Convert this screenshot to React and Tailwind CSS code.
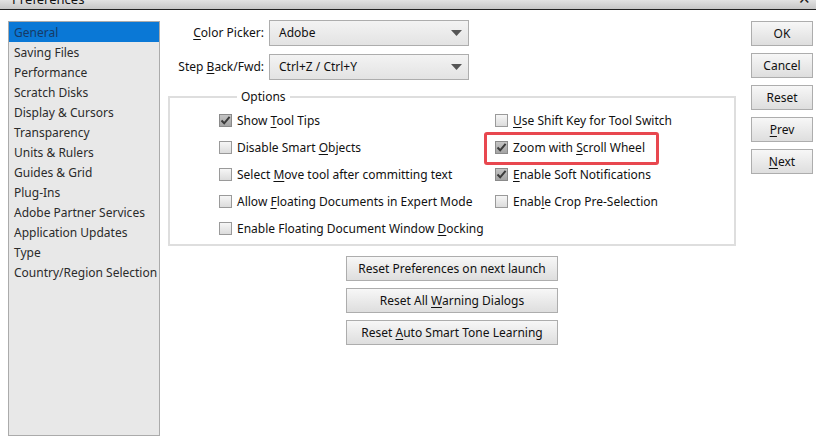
import React from 'react';

const font = { fontFamily: '"Noto Sans", "Open Sans", sans-serif' };

const sections = [
  'General', 'Saving Files', 'Performance', 'Scratch Disks', 'Display & Cursors',
  'Transparency', 'Units & Rulers', 'Guides & Grid', 'Plug-Ins', 'Adobe Partner Services',
  'Application Updates', 'Type', 'Country/Region Selection',
];

// label split as [before, underlined, after]
const leftOpts = [
  { l: ['Show ', 'T', 'ool Tips'], on: true },
  { l: ['Disable Smart ', 'O', 'bjects'], on: false },
  { l: ['Select ', 'M', 'ove tool after committing text'], on: false },
  { l: ['Allow ', 'F', 'loating Documents in Expert Mode'], on: false },
  { l: ['Enable Floating Document Window ', 'D', 'ocking'], on: false },
];
const rightOpts = [
  { l: ['', 'U', 'se Shift Key for Tool Switch'], on: false },
  { l: ['Zoom with ', 'S', 'croll Wheel'], on: true, mark: true },
  { l: ['', 'E', 'nable Soft Notifications'], on: true },
  { l: ['Enab', 'l', 'e Crop Pre-Selection'], on: false },
];

function Acc({ parts }) {
  return (
    <>
      {parts[0]}<span className="underline underline-offset-2">{parts[1]}</span>{parts[2]}
    </>
  );
}

function Box({ on }) {
  return (
    <span className={`w-[13px] h-[13px] shrink-0 border flex items-center justify-center ${on ? 'border-[#8a8a8a] bg-gradient-to-b from-[#c4c4c4] to-[#a4a4a4]' : 'border-[#9a9a9a] bg-gradient-to-b from-[#f6f6f6] to-[#dcdcdc]'}`}>
      {on && (
        <svg width="11" height="11" viewBox="0 0 11 11">
          <path d="M1.5 5.5 L4.2 8.3 L9.6 1.8" fill="none" stroke="#3a3a3a" strokeWidth="2" />
        </svg>
      )}
    </span>
  );
}

function Option({ o }) {
  return (
    <div className="h-[27px] flex items-center">
      <div className="relative flex items-center gap-[5px]">
        <Box on={o.on} />
        <span className="text-[12px] text-[#111] leading-none whitespace-nowrap"><Acc parts={o.l} /></span>
        {o.mark && (
          <span className="absolute left-[-11px] top-[-9px] w-[175px] h-[33px] border-[3px] border-[#e8474f] rounded-[3px]" />
        )}
      </div>
    </div>
  );
}

function Btn({ children, w }) {
  return (
    <button className={`${w} h-[25px] border border-[#adadad] bg-gradient-to-b from-[#f7f7f7] to-[#dedede] text-[12px] text-[#111] leading-none whitespace-nowrap`}>
      {children}
    </button>
  );
}

function Select({ value }) {
  return (
    <div className="w-[200px] h-[26px] border border-[#adadad] bg-gradient-to-b from-[#f3f3f3] to-[#e3e3e3] flex items-center pl-[9px] pr-[6px]">
      <span className="flex-1 text-[12px] text-[#111]">{value}</span>
      <svg width="11" height="6" viewBox="0 0 11 6"><path d="M0 0 H11 L5.5 6 Z" fill="#555" /></svg>
    </div>
  );
}

export default function App() {
  return (
    <div className="w-[816px] h-[444px] bg-white overflow-hidden" style={font}>
      <div className="h-[10px] border-b border-[#222] bg-gradient-to-b from-[#e2e2e2] to-[#c6c6c6] overflow-hidden flex justify-between pl-[12px] pr-[5px]">
        <span className="text-[13px] leading-none mt-[-7px] text-[#111]">Preferences</span>
        <span className="text-[15px] leading-none mt-[-9px] text-[#222]">✕</span>
      </div>

      <div className="flex">
        <div className="ml-[8px] mt-[11px] w-[152px] h-[415px] border border-[#ababab] bg-[#e8e8e8] text-[12px]">
          {sections.map((s, i) => (
            <div key={s} className={`h-[20px] leading-[21px] pl-[5px] whitespace-nowrap ${i === 0 ? 'bg-[#0a78d6] text-[#163a66]' : 'text-[#2b2b2b]'}`}>
              {s}
            </div>
          ))}
        </div>

        <div className="ml-[8px] w-[568px] pt-[10px] flex flex-col">
          <div className="flex items-center gap-[5px]">
            <span className="w-[96px] text-right text-[12px] text-[#111]"><Acc parts={['', 'C', 'olor Picker:']} /></span>
            <Select value="Adobe" />
          </div>
          <div className="flex items-center gap-[5px] mt-[8px]">
            <span className="w-[96px] text-right text-[12px] text-[#111]"><Acc parts={['Step ', 'B', 'ack/Fwd:']} /></span>
            <Select value="Ctrl+Z / Ctrl+Y" />
          </div>

          <fieldset className="mt-[8px] border-2 border-[#dedede] pl-[49px] pb-[2px]">
            <legend className="ml-[18px] px-[4px] text-[12px] text-[#111]">Options</legend>
            <div className="grid grid-cols-[276px_1fr] mt-[1px]">
              <div>{leftOpts.map((o, i) => <Option key={i} o={o} />)}</div>
              <div>{rightOpts.map((o, i) => <Option key={i} o={o} />)}</div>
            </div>
          </fieldset>

          <div className="mt-[10px] flex flex-col items-center gap-[7px]">
            <Btn w="w-[212px]">Reset Preferences on next launch</Btn>
            <Btn w="w-[212px]"><Acc parts={['Reset All ', 'W', 'arning Dialogs']} /></Btn>
            <Btn w="w-[212px]"><Acc parts={['Reset ', 'A', 'uto Smart Tone Learning']} /></Btn>
          </div>
        </div>

        <div className="ml-[15px] mt-[11px] flex flex-col gap-[7px]">
          <Btn w="w-[62px]">OK</Btn>
          <Btn w="w-[62px]">Cancel</Btn>
          <Btn w="w-[62px]">Reset</Btn>
          <Btn w="w-[62px]"><Acc parts={['', 'P', 'rev']} /></Btn>
          <Btn w="w-[62px]"><Acc parts={['', 'N', 'ext']} /></Btn>
        </div>
      </div>
    </div>
  );
}
